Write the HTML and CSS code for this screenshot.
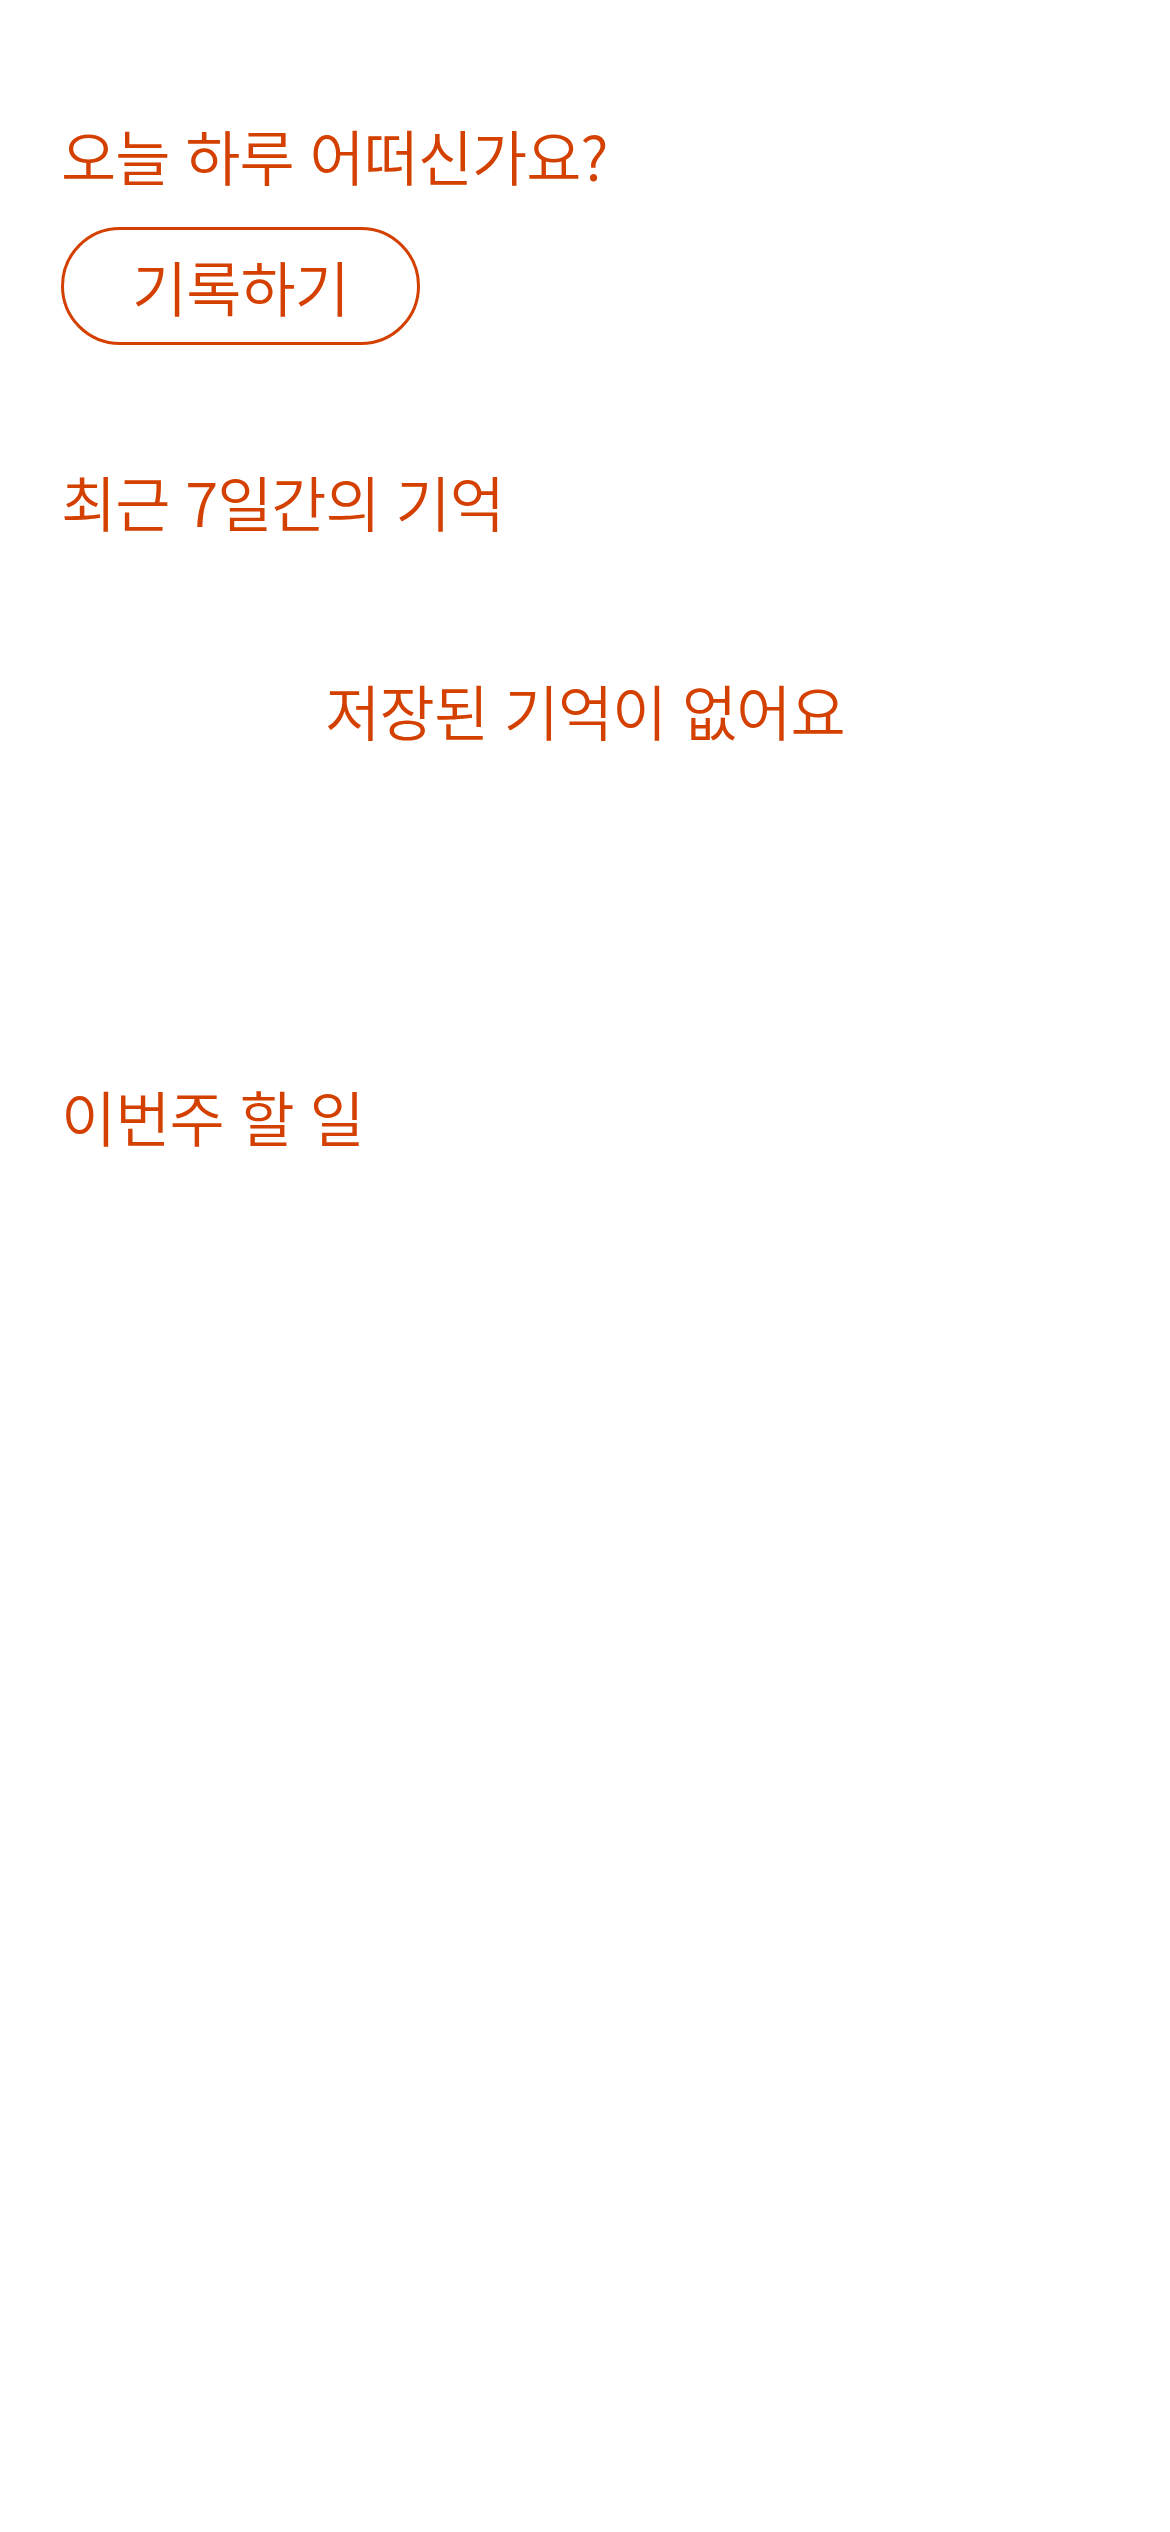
FILE: index.html
```html
<!DOCTYPE html>
<html lang="ko">
<head>
<meta charset="utf-8">
<title>홈</title>
<link rel="stylesheet" href="styles.css">
</head>
<body>
<main class="page">
  <section class="today">
    <h1 class="title">오늘 하루 어떠신가요?</h1>
    <button class="record-btn" type="button">기록하기</button>
  </section>
  <section class="memories">
    <h2 class="title">최근 7일간의 기억</h2>
    <p class="empty">저장된 기억이 없어요</p>
  </section>
  <section class="todos">
    <h2 class="title">이번주 할 일</h2>
  </section>
</main>
</body>
</html>
```

FILE: styles.css
```css
html, body {
  margin: 0;
  padding: 0;
  background: #ffffff;
}

body {
  font-family: "Noto Sans CJK KR", "Noto Sans", sans-serif;
  color: #d44000;
}

.page {
  padding: 119px 61px 0;
  display: flex;
  flex-direction: column;
}

.title {
  margin: 0;
  font-size: 60px;
  font-weight: 350;
  line-height: 72px;
  letter-spacing: -1px;
}

.today {
  display: flex;
  flex-direction: column;
  align-items: flex-start;
  gap: 36px;
}

.record-btn {
  width: 359px;
  height: 118px;
  border: 3px solid #d44000;
  border-radius: 59px;
  background: #ffffff;
  color: #d44000;
  font-family: inherit;
  font-size: 60px;
  font-weight: 350;
  line-height: 72px;
  letter-spacing: -1px;
  padding: 0;
  display: flex;
  align-items: center;
  justify-content: center;
}

.memories {
  margin-top: 120px;
  display: flex;
  flex-direction: column;
}

.empty {
  margin: 137px 0 0;
  font-size: 60px;
  font-weight: 350;
  line-height: 72px;
  letter-spacing: -1px;
  text-align: center;
}

.todos {
  margin-top: 334px;
}
```
